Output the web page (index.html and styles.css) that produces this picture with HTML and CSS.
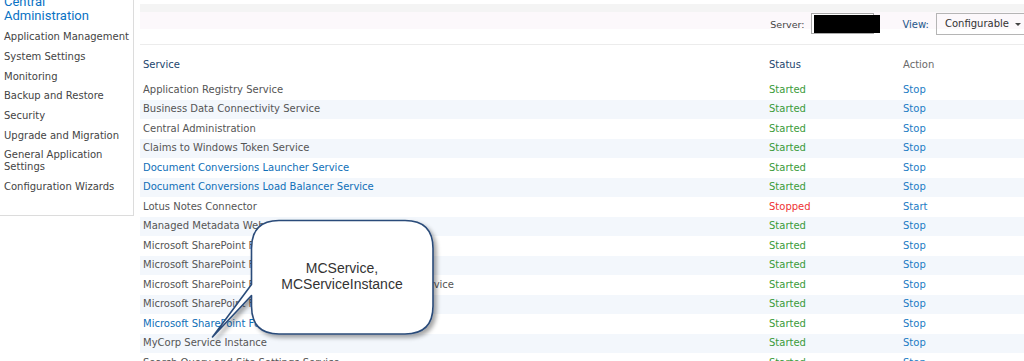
FILE: index.html
```html
<!DOCTYPE html>
<html>
<head>
<meta charset="utf-8">
<link rel="stylesheet" href="styles.css">
</head>
<body>
<div class="page">
  <nav class="nav">
    <div class="nav-title">Central<br>Administration</div>
    <div class="nav-item">Application Management</div>
    <div class="nav-item">System Settings</div>
    <div class="nav-item">Monitoring</div>
    <div class="nav-item">Backup and Restore</div>
    <div class="nav-item">Security</div>
    <div class="nav-item">Upgrade and Migration</div>
    <div class="nav-item">General Application Settings</div>
    <div class="nav-item">Configuration Wizards</div>
  </nav>
  <main class="main">
    <div class="toolbar">
      <span class="lbl-server">Server:</span>
      <span class="server-box"><span class="redact"></span></span>
      <span class="lbl-view">View:</span>
      <span class="dropdown">Configurable <span class="caret"></span></span>
    </div>
    <div class="grid">
      <div class="row head"><span class="c1">Service</span><span class="c2">Status</span><span class="c3">Action</span></div>
      <div class="row"><span class="c1">Application Registry Service</span><span class="c2 ok">Started</span><span class="c3 act">Stop</span></div>
      <div class="row alt"><span class="c1">Business Data Connectivity Service</span><span class="c2 ok">Started</span><span class="c3 act">Stop</span></div>
      <div class="row"><span class="c1">Central Administration</span><span class="c2 ok">Started</span><span class="c3 act">Stop</span></div>
      <div class="row alt"><span class="c1">Claims to Windows Token Service</span><span class="c2 ok">Started</span><span class="c3 act">Stop</span></div>
      <div class="row"><span class="c1 link">Document Conversions Launcher Service</span><span class="c2 ok">Started</span><span class="c3 act">Stop</span></div>
      <div class="row alt"><span class="c1 link">Document Conversions Load Balancer Service</span><span class="c2 ok">Started</span><span class="c3 act">Stop</span></div>
      <div class="row"><span class="c1">Lotus Notes Connector</span><span class="c2 bad">Stopped</span><span class="c3 act">Start</span></div>
      <div class="row alt"><span class="c1">Managed Metadata Web Service</span><span class="c2 ok">Started</span><span class="c3 act">Stop</span></div>
      <div class="row"><span class="c1">Microsoft SharePoint Foundation Incoming E-Mail</span><span class="c2 ok">Started</span><span class="c3 act">Stop</span></div>
      <div class="row alt"><span class="c1">Microsoft SharePoint Foundation Sandboxed Code Service</span><span class="c2 ok">Started</span><span class="c3 act">Stop</span></div>
      <div class="row"><span class="c1">Microsoft SharePoint Foundation Subscription Settings Service</span><span class="c2 ok">Started</span><span class="c3 act">Stop</span></div>
      <div class="row alt"><span class="c1">Microsoft SharePoint Foundation Web Application</span><span class="c2 ok">Started</span><span class="c3 act">Stop</span></div>
      <div class="row"><span class="c1 link">Microsoft SharePoint Foundation Workflow Timer Service</span><span class="c2 ok">Started</span><span class="c3 act">Stop</span></div>
      <div class="row alt"><span class="c1">MyCorp Service Instance</span><span class="c2 ok">Started</span><span class="c3 act">Stop</span></div>
      <div class="row"><span class="c1">Search Query and Site Settings Service</span><span class="c2 ok">Started</span><span class="c3 act">Stop</span></div>
    </div>
  </main>
</div>
<div class="callout">
  <svg class="callout-shape" width="1024" height="361" viewBox="0 0 1024 361">
    <defs>
      <filter id="sh" x="-20%" y="-20%" width="140%" height="140%">
        <feDropShadow dx="3" dy="3" stdDeviation="2.2" flood-color="#000" flood-opacity="0.35"/>
      </filter>
    </defs>
    <path d="M279 220.5 H405 Q433 220.5 433 248.5 V306 Q433 334 405 334 H279 Q251.5 334 251.5 306 V295.5 L212.5 337 L251.5 284.5 V248.5 Q251.5 220.5 279 220.5 Z" fill="#fff" stroke="#2b4c7a" stroke-width="1.6" stroke-linejoin="round" filter="url(#sh)"/>
  </svg>
  <div class="callout-text">MCService,<br>MCServiceInstance</div>
</div>
</body>
</html>
```

FILE: styles.css
```css
html, body {
  margin: 0;
  padding: 0;
}
body {
  width: 1024px;
  height: 361px;
  overflow: hidden;
  position: relative;
  background: #fff;
  font-family: "DejaVu Sans", Verdana, sans-serif;
  font-size: 10px;
}
.page {
  display: flex;
  align-items: flex-start;
}
.nav {
  width: 129px;
  height: 215px;
  padding-left: 4px;
  border-right: 1px solid #dcdcdc;
  border-bottom: 1px solid #dcdcdc;
  color: #444;
  flex-shrink: 0;
}
.nav-title {
  font-family: Roboto, "Open Sans", sans-serif;
  font-size: 13px;
  line-height: 14px;
  color: #0a72c4;
  margin-top: -5px;
  margin-bottom: 4.4px;
}
.nav-item {
  line-height: 12px;
  padding: 3.85px 0;
  white-space: normal;
}
.nav-item:first-of-type {
  white-space: nowrap;
}
.main {
  flex: 1;
  margin-left: 6px;
  min-width: 0;
}
.toolbar {
  height: 45px;
  box-sizing: border-box;
  border-bottom: 1px solid #ececec;
  background: linear-gradient(to bottom, #fff 0 4px, #f4f4f4 4px 12px, #fcf8fb 12px 29px, #fff 29px);
  display: flex;
  justify-content: flex-end;
  align-items: flex-start;
  padding-top: 13px;
  margin-right: -20px;
}
.lbl-server {
  color: #444;
  margin-top: 6px;
  font-size: 9.5px;
}
.server-box {
  position: relative;
  width: 61px;
  height: 19px;
  border: 1px solid #a9a9a9;
  background: #fff;
  margin-left: 7px;
}
.redact {
  position: absolute;
  left: 2px;
  top: 1px;
  width: 66px;
  height: 18px;
  background: #000;
}
.lbl-view {
  color: #25578a;
  margin-left: 28px;
  margin-top: 6px;
}
.dropdown {
  margin-left: 7px;
  width: 98px;
  height: 20px;
  border: 1px solid #b5b5b5;
  padding-left: 8px;
  color: #333;
  line-height: 20px;
  display: flex;
  align-items: center;
  gap: 6px;
}
.caret {
  width: 0;
  height: 0;
  border-left: 3px solid transparent;
  border-right: 3px solid transparent;
  border-top: 3px solid #444;
  margin-top: 1px;
}
.grid {
  display: flex;
  flex-direction: column;
}
.row {
  display: grid;
  grid-template-columns: 626px 134px 1fr;
  height: 19.5px;
  align-items: center;
  padding-left: 3px;
  line-height: 12px;
  color: #555;
  white-space: nowrap;
}
.row.alt {
  background: #f3f7fc;
}
.row.head {
  height: 35px;
  align-items: start;
  padding-top: 14px;
  box-sizing: border-box;
}
.row.head .c1, .row.head .c2 {
  color: #23466e;
}
.row.head .c3 {
  color: #6a6a6a;
}
.link {
  color: #0f6fb8;
}
.ok {
  color: #3a9b3a;
}
.bad {
  color: #ee3333;
}
.act {
  color: #1c7cc4;
}
.callout {
  position: absolute;
  left: 0;
  top: 0;
  width: 1024px;
  height: 361px;
  pointer-events: none;
}
.callout-shape {
  position: absolute;
  left: 0;
  top: 0;
}
.callout-text {
  position: absolute;
  left: 251px;
  top: 219px;
  width: 182px;
  height: 114px;
  display: flex;
  align-items: center;
  justify-content: center;
  text-align: center;
  font-family: "Liberation Sans", Arial, sans-serif;
  font-size: 14px;
  line-height: 16px;
  color: #333;
}
```
